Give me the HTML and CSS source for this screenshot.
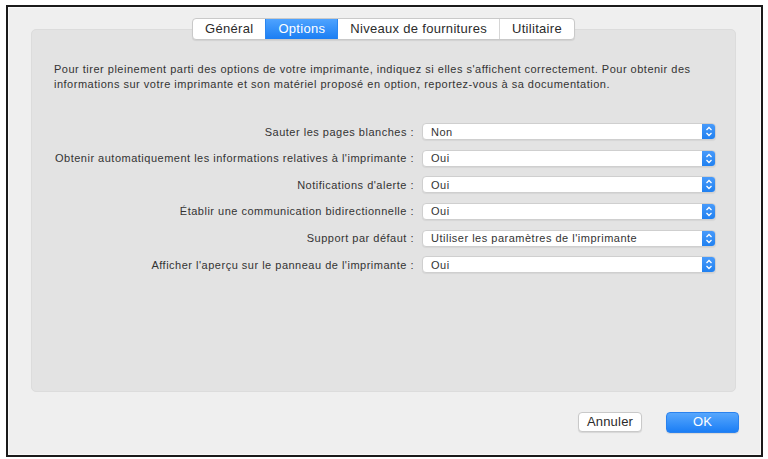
FILE: index.html
```html
<!DOCTYPE html>
<html lang="fr">
<head>
<meta charset="utf-8">
<link rel="stylesheet" href="styles.css">
</head>
<body>
<div class="window">
  <div class="tabs">
    <div class="tab">Général</div>
    <div class="tab active">Options</div>
    <div class="tab">Niveaux de fournitures</div>
    <div class="tab">Utilitaire</div>
  </div>
  <div class="panel">
    <p class="intro">Pour tirer pleinement parti des options de votre imprimante, indiquez si elles s'affichent correctement. Pour obtenir des informations sur votre imprimante et son matériel proposé en option, reportez-vous à sa documentation.</p>
    <div class="form">
      <div class="label">Sauter les pages blanches :</div>
      <div class="select"><span class="val">Non</span><span class="step"><svg width="8" height="11" viewBox="0 0 8 11"><path d="M1.5 4 L4 1.5 L6.5 4 M1.5 7 L4 9.5 L6.5 7" fill="none" stroke="#fff" stroke-width="1.3"/></svg></span></div>
      <div class="label">Obtenir automatiquement les informations relatives à l'imprimante :</div>
      <div class="select"><span class="val">Oui</span><span class="step"><svg width="8" height="11" viewBox="0 0 8 11"><path d="M1.5 4 L4 1.5 L6.5 4 M1.5 7 L4 9.5 L6.5 7" fill="none" stroke="#fff" stroke-width="1.3"/></svg></span></div>
      <div class="label">Notifications d'alerte :</div>
      <div class="select"><span class="val">Oui</span><span class="step"><svg width="8" height="11" viewBox="0 0 8 11"><path d="M1.5 4 L4 1.5 L6.5 4 M1.5 7 L4 9.5 L6.5 7" fill="none" stroke="#fff" stroke-width="1.3"/></svg></span></div>
      <div class="label">Établir une communication bidirectionnelle :</div>
      <div class="select"><span class="val">Oui</span><span class="step"><svg width="8" height="11" viewBox="0 0 8 11"><path d="M1.5 4 L4 1.5 L6.5 4 M1.5 7 L4 9.5 L6.5 7" fill="none" stroke="#fff" stroke-width="1.3"/></svg></span></div>
      <div class="label">Support par défaut :</div>
      <div class="select"><span class="val">Utiliser les paramètres de l'imprimante</span><span class="step"><svg width="8" height="11" viewBox="0 0 8 11"><path d="M1.5 4 L4 1.5 L6.5 4 M1.5 7 L4 9.5 L6.5 7" fill="none" stroke="#fff" stroke-width="1.3"/></svg></span></div>
      <div class="label">Afficher l'aperçu sur le panneau de l'imprimante :</div>
      <div class="select"><span class="val">Oui</span><span class="step"><svg width="8" height="11" viewBox="0 0 8 11"><path d="M1.5 4 L4 1.5 L6.5 4 M1.5 7 L4 9.5 L6.5 7" fill="none" stroke="#fff" stroke-width="1.3"/></svg></span></div>
    </div>
  </div>
  <div class="buttons">
    <div class="btn">Annuler</div>
    <div class="btn primary">OK</div>
  </div>
</div>
</body>
</html>
```

FILE: styles.css
```css
html, body {
  margin: 0;
  padding: 0;
  background: #ffffff;
}
body {
  font-family: "Liberation Sans", Arial, sans-serif;
  color: #2e2e2e;
  padding: 5px 0 0 6px;
}
.window {
  width: 753px;
  height: 448px;
  border: 2px solid #1a1a1a;
  background: #efefef;
  display: flex;
  flex-direction: column;
  box-shadow: inset 0 0 0 1px #f8f8f8;
}
.tabs {
  display: flex;
  justify-content: center;
  margin-top: 11px;
  margin-bottom: -11px;
  position: relative;
  z-index: 1;
  align-self: center;
  margin-left: -2px;
  background: #fff;
  border: 1px solid #c9c9c9;
  border-radius: 4px;
  box-shadow: 0 1px 1px rgba(0,0,0,0.08);
  overflow: hidden;
}
.tab {
  height: 20px;
  line-height: 20px;
  font-size: 13px;
  letter-spacing: 0.3px;
  padding: 0 12px;
  color: #2b2b2b;
  border-left: 1px solid #d6d6d6;
}
.tab:first-child {
  border-left: none;
}
.tab.active {
  background: linear-gradient(#4ea3ff, #1b7ef3);
  color: #fff;
  border-left-color: #2a86f0;
}
.tab.active + .tab {
  border-left-color: #2a86f0;
}
.panel {
  margin: 0 0 0 23px;
  width: 705px;
  height: 363px;
  box-sizing: border-box;
  background: #e3e3e3;
  border: 1px solid #dcdcdc;
  border-radius: 5px;
  padding: 32px 0 0 22px;
}
.intro {
  margin: 0;
  font-size: 11px;
  letter-spacing: 0.5px;
  line-height: 15px;
  width: 665px;
  color: #333;
}
.form {
  display: grid;
  grid-template-columns: 360px 294px;
  column-gap: 8px;
  row-gap: 9.67px;
  margin-top: 31px;
  align-items: center;
}
.label {
  text-align: right;
  font-size: 11px;
  letter-spacing: 0.5px;
  color: #333;
  white-space: nowrap;
}
.select {
  height: 17px;
  box-sizing: border-box;
  background: #fff;
  border: 1px solid #cfcfcf;
  border-radius: 4px;
  display: flex;
  align-items: center;
  box-shadow: 0 1px 1px rgba(0,0,0,0.06);
  overflow: hidden;
}
.val {
  flex: 1;
  font-size: 11px;
  letter-spacing: 0.5px;
  padding-left: 8px;
  color: #333;
}
.step {
  width: 14px;
  height: 17px;
  margin: -1px -1px -1px 0;
  background: linear-gradient(#4a9cfb, #1e7ff0);
  display: flex;
  align-items: center;
  justify-content: center;
}
.buttons {
  display: flex;
  justify-content: flex-end;
  gap: 24px;
  margin: 20px 22px 0 0;
}
.btn {
  width: 64px;
  height: 20px;
  box-sizing: border-box;
  line-height: 18px;
  text-align: center;
  font-size: 13px;
  letter-spacing: 0.2px;
  background: #fff;
  border: 1px solid #c9c9c9;
  border-radius: 4px;
  box-shadow: 0 1px 1px rgba(0,0,0,0.1);
  color: #2b2b2b;
}
.btn.primary {
  width: 73px;
  height: 21px;
  background: linear-gradient(#57a7fd, #1b7ef5);
  border-color: #2a82ee;
  color: #fff;
}
```
